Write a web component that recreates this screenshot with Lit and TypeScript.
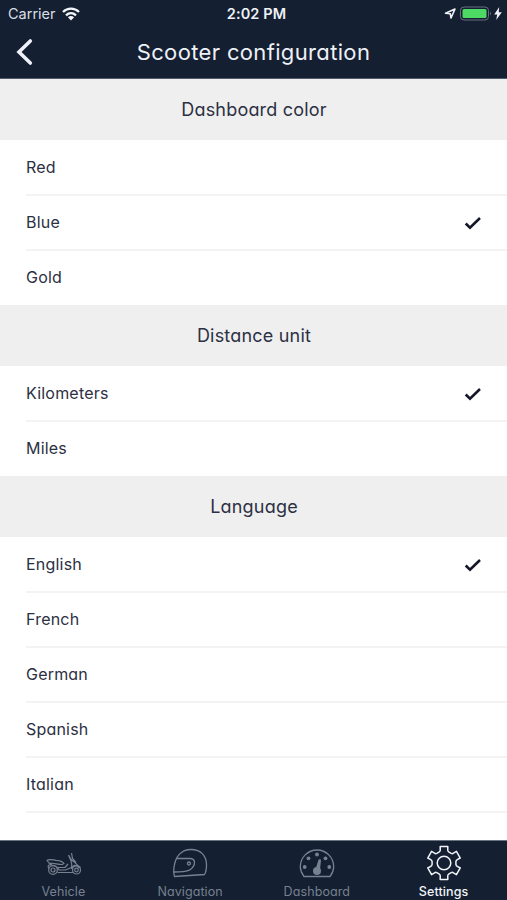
import { LitElement, html, svg, css, nothing } from "lit";
import { customElement } from "lit/decorators.js";
import { classMap } from "lit/directives/class-map.js";

const sections = [
  { title: "Dashboard color", options: ["Red", "Blue", "Gold"], selected: "Blue", open: false },
  { title: "Distance unit", options: ["Kilometers", "Miles"], selected: "Kilometers", open: false },
  { title: "Language", options: ["English", "French", "German", "Spanish", "Italian"], selected: "English", open: true },
];

const gearPath = (() => {
  const at = (r: number, deg: number) => {
    const a = (deg * Math.PI) / 180;
    return (18 + r * Math.sin(a)).toFixed(2) + " " + (18 - r * Math.cos(a)).toFixed(2);
  };
  let d = "";
  for (let i = 0; i < 6; i++) {
    const c = i * 60;
    d += (i ? "L" : "M") + at(12, c - 23) + "Q" + at(12.4, c - 17) + " " + at(13.6, c - 16);
    d += "L" + at(17, c - 13) + "L" + at(17, c + 13) + "L" + at(13.6, c + 16);
    d += "Q" + at(12.4, c + 17) + " " + at(12, c + 23);
  }
  return d + "Z";
})();

const tabs = [
  {
    label: "Vehicle",
    icon: svg`<g stroke-width="1.200" stroke-linejoin="round"><path d="M4 23.500C2 21.500 3.500 19.500 7 19M2 15.500C4 13.500 8 15 11 15.300C15 15.600 17.500 16 19 18.500L17 19.500C13 19.500 9 18 4 18ZM4 18L6 20C11 20.500 13 22 14 25H20.500L26.500 22.500C28 18 24.500 13 23.500 10M23.500 10L26.500 15C28 16.500 33.500 19 33.500 23M26.500 8L27.500 13.500L31 17.500M12.500 27.500H28M13 22.500H20L23 19"/><circle cx="8" cy="25" r="4.300"/><circle cx="8" cy="25" r="2"/><circle cx="31.500" cy="25" r="4"/><circle cx="31.500" cy="25" r="1.800"/><path d="M26.500 24C27.500 20 32 19 35.500 22.500"/></g>`,
  },
  {
    label: "Navigation",
    icon: svg`<path d="M2.500 31.500C1.500 29 1.300 26 2 22C3.500 12 9 4.500 19 4.500C29 4.500 34.500 11 34.500 20C34.500 24 33.500 28 32.500 29.500Z"/><path d="M4.500 13.500H17.500C24.500 13.500 23.500 20.500 18.500 24.500C14.500 27.300 9 26.500 2 27"/><circle cx="16.900" cy="18.500" r="1.500"/>`,
  },
  {
    label: "Dashboard",
    icon: svg`<path d="M5 31.500C2.700 28.500 1.300 25.500 1.300 21.700A16.700 16.700 0 0 1 34.700 21.700C34.700 25.500 33.300 28.500 31 31.500Z"/><g fill="currentColor" stroke="none"><circle cx="5.700" cy="22" r="1.900"/><circle cx="9.500" cy="13.300" r="1.900"/><circle cx="18" cy="9.500" r="1.900"/><circle cx="26.500" cy="13.300" r="1.900"/><circle cx="30.300" cy="22" r="1.900"/><circle cx="18" cy="26" r="4"/><path d="M19.500 14.800C20 13.800 22.200 14 22 15.500L20.800 26H16Z"/></g>`,
  },
  {
    label: "Settings",
    icon: svg`<path d=${gearPath} stroke-width="1.500" stroke-linejoin="round"/><circle cx="18" cy="18" r="6.800" stroke-width="1.500"/>`,
  },
];

@customElement("app-root")
export class AppRoot extends LitElement {
  static styles = css`
    :host { display: flex; flex-direction: column; height: 900px; background: #fff; color: #2c3043;
      font-family: Inter, "Noto Sans", sans-serif; font-feature-settings: "cv11"; overflow: hidden; }
    * { box-sizing: border-box; }
    svg { display: block; fill: none; stroke: currentColor; }
    .top { height: 79px; flex: none; background: #141f31; color: #eef1f7; border-bottom: 1px solid #50596b; }
    .status { height: 27px; display: grid; grid-template-columns: 1fr auto 1fr; align-items: center;
      padding: 0 5px 0 8px; font-family: Inter, sans-serif; font-feature-settings: normal; font-size: 14.5px; }
    .left, .right { display: flex; align-items: center; }
    .left { gap: 6px; color: #d9dde5; }
    .left svg { color: #f4f6fa; }
    .right { justify-content: flex-end; gap: 2px; }
    .time { font-weight: 600; padding-left: 3px; letter-spacing: 0.1px; }
    .nav { height: 50px; display: grid; grid-template-columns: 60px 1fr 60px; align-items: center; }
    .back { margin-left: 15px; }
    .title { font-size: 22px; text-align: center; white-space: nowrap; letter-spacing: 0.35px; padding-bottom: 1px; }
    .list { flex: 1; min-height: 0; overflow: hidden; }
    .heading { height: 61px; display: flex; align-items: center; justify-content: center;
      background: #efefef; font-size: 18px; letter-spacing: 0.2px; padding-left: 1px; }
    .row { height: 55px; padding: 0 25px 0 26px; display: flex; align-items: center;
      justify-content: space-between; font-size: 16px; letter-spacing: 0.2px; }
    .row span { padding-bottom: 2px; }
    .check { color: #141629; }
    .line { height: 2px; margin: -1px 0 -1px 26px; background: #f3f3f4; }
    .tabs { height: 60px; flex: none; display: grid; grid-template-columns: repeat(4, 1fr);
      background: #141f31; border-top: 1px solid #6b7280; }
    .tab { display: flex; flex-direction: column; align-items: center; color: #788190;
      font-size: 12.5px; line-height: 16px; padding-top: 4px; gap: 3px; letter-spacing: 0.1px; }
    .tab.active { color: #f1f4f9; font-weight: 500; }
  `;

  render() {
    return html`
      <header class="top">
        <div class="status">
          <div class="left"><span>Carrier</span>
            <svg width="18" height="14" viewBox="0 0 18 14" stroke-width="2.300"><path d="M1 5C5.500 .6 12.500 .6 17 5M4 8.300C7 5.500 11 5.500 14 8.300"/><path fill="currentColor" stroke="none" d="M9 13.500L5.900 10.200Q9 7.800 12.100 10.200Z"/></svg>
          </div>
          <div class="time">2:02 PM</div>
          <div class="right">
            <svg width="13" height="13" viewBox="0 0 13 13" stroke-width="1.600" stroke-linejoin="round"><path d="M1.500 6.300L11 2L7 11L6.300 6.800Z"/></svg>
            <svg width="33" height="15" viewBox="0 0 33 15"><rect x="1.500" y="1" width="28" height="13" rx="3.500" stroke="#68707e"/><rect x="3.500" y="3" width="24" height="9" rx="1.500" fill="#4cd964" stroke="none"/><path d="M31 5.500Q33 7.500 31 9.500Z" fill="#68707e" stroke="none"/></svg>
            <svg width="8" height="13" viewBox="0 0 8 13"><path d="M5.200 0L.2 7.500H3.200L2.200 13L7.800 5.300H4.700Z" fill="currentColor" stroke="none"/></svg>
          </div>
        </div>
        <div class="nav">
          <svg class="back" width="19" height="28" viewBox="0 0 19 28" stroke-width="3.600" stroke-linecap="round"><path d="M15.300 3L4 14L15.300 25"/></svg>
          <div class="title">Scooter configuration</div>
        </div>
      </header>
      <main class="list">
        ${sections.map((s) => html`
          <div class="heading">${s.title}</div>
          ${s.options.map((o, i) => html`
            <div class="row"><span>${o}</span>
              ${o === s.selected
                ? html`<svg class="check" width="18" height="14" viewBox="0 0 18 14" stroke-width="2.600"><path d="M1.700 7.500L6 11.700L16 2"/></svg>`
                : nothing}
            </div>
            ${s.open || i < s.options.length - 1 ? html`<div class="line"></div>` : nothing}
          `)}
        `)}
      </main>
      <nav class="tabs">
        ${tabs.map((t) => html`
          <div class=${classMap({ tab: true, active: t.label === "Settings" })}>
            <svg width="36" height="36" viewBox="0 0 36 36" stroke-width="1.300">${t.icon}</svg>
            <span>${t.label}</span>
          </div>`)}
      </nav>
    `;
  }
}
